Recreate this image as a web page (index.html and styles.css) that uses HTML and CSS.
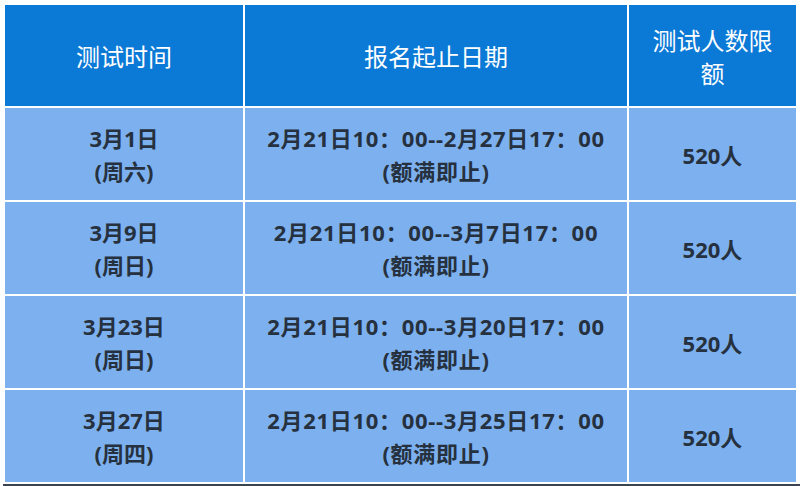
FILE: index.html
```html
<!DOCTYPE html>
<html lang="zh-CN">
<head>
<meta charset="utf-8">
<title>测试时间</title>
<link rel="stylesheet" href="styles.css">
</head>
<body>
<div class="table">
  <div class="cell head">测试时间</div>
  <div class="cell head">报名起止日期</div>
  <div class="cell head narrow">测试人数限<br>额</div>

  <div class="cell">3月1日<br>(周六)</div>
  <div class="cell period">2月21日10：00--2月27日17：00<br>(额满即止)</div>
  <div class="cell">520人</div>

  <div class="cell">3月9日<br>(周日)</div>
  <div class="cell period">2月21日10：00--3月7日17：00<br>(额满即止)</div>
  <div class="cell">520人</div>

  <div class="cell">3月23日<br>(周日)</div>
  <div class="cell period">2月21日10：00--3月20日17：00<br>(额满即止)</div>
  <div class="cell">520人</div>

  <div class="cell">3月27日<br>(周四)</div>
  <div class="cell period">2月21日10：00--3月25日17：00<br>(额满即止)</div>
  <div class="cell">520人</div>
</div>
<div class="bottom-line"></div>
</body>
</html>
```

FILE: styles.css
```css
html, body {
  margin: 0;
  background: #ffffff;
}
body {
  width: 800px;
  height: 486px;
  overflow: hidden;
  padding: 5px 0 0 5px;
  box-sizing: border-box;
  font-family: "Noto Sans", "Noto Sans CJK SC", sans-serif;
}
.table {
  display: grid;
  grid-template-columns: 238px 382px 167px;
  grid-template-rows: 101px repeat(4, 92px);
  gap: 2px;
}
.cell {
  background: #7db0ee;
  color: #263140;
  font-weight: 700;
  font-size: 22px;
  line-height: 33px;
  display: flex;
  align-items: center;
  justify-content: center;
  text-align: center;
  padding-top: 2px;
  box-sizing: border-box;
}
.cell.period {
  letter-spacing: 0.7px;
}
.cell.head {
  background: #0b79d6;
  color: #ffffff;
  font-weight: 400;
  font-size: 24px;
  line-height: 33px;
  padding-top: 0;
  letter-spacing: 0;
  font-family: "Noto Sans CJK SC", "Noto Sans", sans-serif;
}
.bottom-line {
  margin-top: 2px;
  margin-left: -2px;
  height: 2px;
  background: #3b4550;
}
```
